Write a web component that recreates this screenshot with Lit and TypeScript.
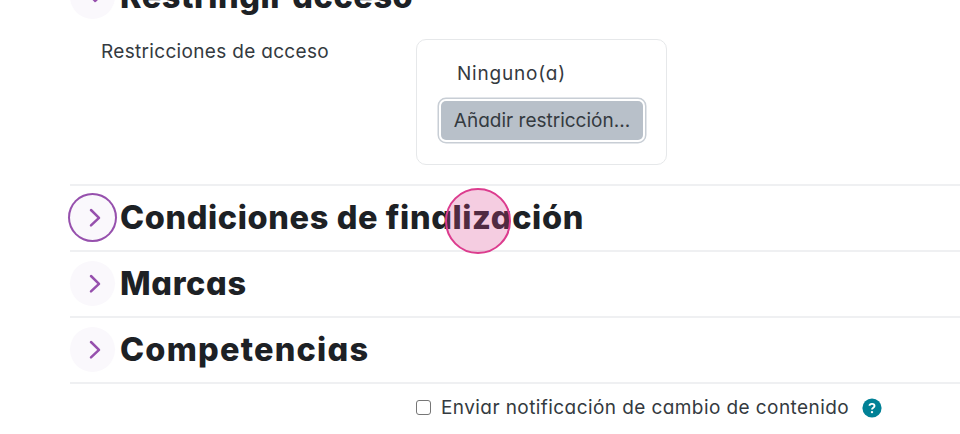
import { LitElement, html, css } from 'lit';
import { customElement, property } from 'lit/decorators.js';

@customElement('form-section-header')
export class FormSectionHeader extends LitElement {
  static styles = css`
    :host {
      display: flex;
      align-items: center;
      height: 66px;
      box-sizing: border-box;
      border-top: 2px solid #eff0f2;
    }

    .toggle {
      display: flex;
      align-items: center;
      justify-content: center;
      flex: none;
      width: 45px;
      height: 45px;
      margin: 0 0 1px;
      padding: 0 0 0 4.5px;
      box-sizing: border-box;
      border: none;
      border-radius: 50%;
      background: #faf8fc;
      color: #9650ad;
    }

    :host([focused]) .toggle {
      box-shadow: 0 0 0 2px #9650ad;
    }

    :host([open]) .toggle svg {
      transform: rotate(90deg);
    }

    h3 {
      margin: 0 0 0 5px;
      font-size: 32.5px;
      font-weight: 800;
      line-height: 40px;
      white-space: nowrap;
      color: #1d2125;
    }
  `;

  @property({ type: Boolean, reflect: true })
  open = false;

  @property({ type: Boolean, reflect: true })
  focused = false;

  render() {
    return html`
      <button class="toggle" aria-expanded=${this.open}>
        <svg width="12" height="20" viewBox="0 0 12 20" fill="none">
          <path d="M2 2 L10 9.8 L2 17.4" stroke="currentColor" stroke-width="2.5" stroke-linecap="round" stroke-linejoin="round" />
        </svg>
      </button>
      <h3><slot></slot></h3>
    `;
  }
}

@customElement('app-root')
export class AppRoot extends LitElement {
  static styles = css`
    :host {
      display: block;
      position: relative;
      height: 434px;
      padding-left: 70px;
      box-sizing: border-box;
      overflow: hidden;
      background: #fff;
      color: #343a40;
      font-family: Inter, 'Open Sans', sans-serif;
      font-feature-settings: 'cv11' 1;
      font-size: 19px;
      line-height: 30px;
    }

    .top {
      margin-top: -37px;
    }

    .restrict-title {
      letter-spacing: 0.56px;
    }

    .completion-title {
      letter-spacing: 0.6px;
    }

    .tags-title {
      letter-spacing: 0.65px;
    }

    .skills-title {
      letter-spacing: 1.2px;
    }

    .restrictions {
      display: flex;
      align-items: flex-start;
      height: 155px;
      box-sizing: border-box;
      padding: 10px 0 0 31px;
    }

    .label {
      width: 315px;
      margin-top: -2px;
      letter-spacing: 0.32px;
    }

    .card {
      width: 251px;
      height: 126px;
      box-sizing: border-box;
      padding: 19px 21px;
      border: 1.3px solid #e6e8ea;
      border-radius: 10px;
    }

    .none {
      padding-left: 19px;
      letter-spacing: 0.8px;
    }

    .add {
      display: block;
      width: 202px;
      height: 39px;
      margin: 12px 0 0 3px;
      padding: 0;
      border: none;
      border-radius: 5px;
      background: #b8c0c9;
      box-shadow: 0 0 0 2px #fff, 0 0 0 3.5px #c8ced5;
      color: #343a40;
      font: inherit;
      font-feature-settings: inherit;
      white-space: nowrap;
    }

    .notify {
      display: flex;
      align-items: center;
      height: 49px;
      padding-left: 346px;
      box-sizing: border-box;
      border-top: 2px solid #eff0f2;
      white-space: nowrap;
    }

    .notify span {
      letter-spacing: 0.42px;
    }

    .notify input {
      appearance: none;
      width: 15px;
      height: 15px;
      margin: 0 10px 0 0;
      box-sizing: border-box;
      border: 1.3px solid #767676;
      border-radius: 3px;
      background: #fff;
    }

    .help {
      width: 20px;
      height: 20px;
      margin-left: 13px;
    }

    .pointer {
      position: absolute;
      left: 445px;
      top: 188px;
      width: 66px;
      height: 66px;
      box-sizing: border-box;
      border: 2px solid #dc3c8e;
      border-radius: 50%;
      background: rgba(217, 72, 143, 0.27);
    }
  `;

  render() {
    return html`
      <form-section-header class="top" open><span class="restrict-title">Restringir acceso</span></form-section-header>
      <div class="restrictions">
        <div class="label">Restricciones de acceso</div>
        <div class="card">
          <div class="none">Ninguno(a)</div>
          <button class="add">Añadir restricción...</button>
        </div>
      </div>
      <form-section-header focused><span class="completion-title">Condiciones de finalización</span></form-section-header>
      <form-section-header><span class="tags-title">Marcas</span></form-section-header>
      <form-section-header><span class="skills-title">Competencias</span></form-section-header>
      <div class="notify">
        <input type="checkbox" />
        <span>Enviar notificación de cambio de contenido</span>
        <svg class="help" viewBox="0 0 20 20">
          <circle cx="10" cy="10" r="9.6" fill="#008196" />
          <path d="M7.5 7.8 C7.7 5.2 12.5 5.2 12.5 8 C12.5 9.7 10 9.8 10 11.5" fill="none" stroke="#fff" stroke-width="1.9" />
          <circle cx="10" cy="14.1" r="1.2" fill="#fff" />
        </svg>
      </div>
      <div class="pointer"></div>
    `;
  }
}

declare global {
  interface HTMLElementTagNameMap {
    'form-section-header': FormSectionHeader;
    'app-root': AppRoot;
  }
}
